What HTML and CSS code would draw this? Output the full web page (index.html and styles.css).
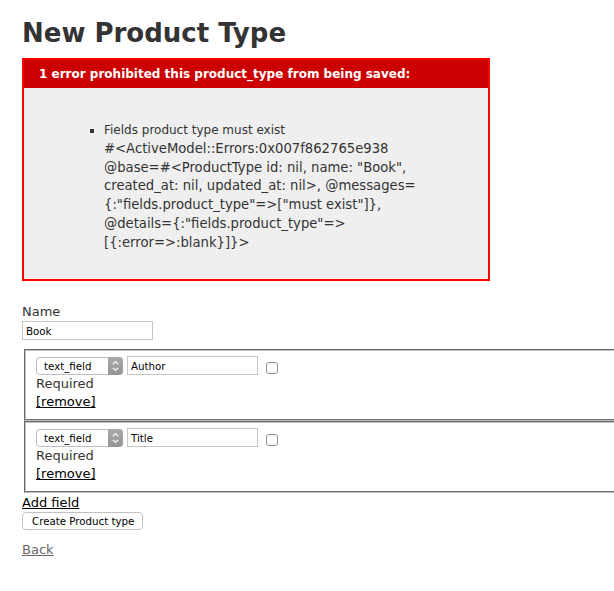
FILE: index.html
```html
<!DOCTYPE html>
<html>
<head>
<meta charset="utf-8">
<title>New Product Type</title>
<link rel="stylesheet" href="styles.css">
</head>
<body>
<h1 class="title">New Product Type</h1>

<div class="error-box">
  <h2 class="error-head">1 error prohibited this product_type from being saved:</h2>
  <ul class="error-list">
    <li>Fields product type must exist<div class="error-dump">#&lt;ActiveModel::Errors:0x007f862765e938<br>@base=#&lt;ProductType id: nil, name: "Book",<br>created_at: nil, updated_at: nil&gt;, @messages=<br>{:"fields.product_type"=&gt;["must exist"]},<br>@details={:"fields.product_type"=&gt;<br>[{:error=&gt;:blank}]}&gt;</div></li>
  </ul>
</div>

<form class="form" onsubmit="return false">
  <div class="name-field">
    <label class="label" for="name">Name</label>
    <input class="text-input" id="name" type="text" value="Book">
  </div>

  <fieldset class="field-set first">
    <div class="control-row">
      <span class="select-wrap">
        <select class="type-select"><option>text_field</option></select>
        <span class="select-arrow"><svg width="15" height="18" viewBox="0 0 15 18"><path d="M4.8 7.2 L7.5 4.6 L10.2 7.2" fill="none" stroke="#f4f4f4" stroke-width="1.3"/><path d="M4.8 10.8 L7.5 13.4 L10.2 10.8" fill="none" stroke="#f4f4f4" stroke-width="1.3"/></svg></span>
      </span>
      <input class="text-input" type="text" value="Author">
      <input class="check" type="checkbox">
    </div>
    <div class="line">Required</div>
    <div class="line"><a class="link" href="#">[remove]</a></div>
  </fieldset>

  <fieldset class="field-set">
    <div class="control-row">
      <span class="select-wrap">
        <select class="type-select"><option>text_field</option></select>
        <span class="select-arrow"><svg width="15" height="18" viewBox="0 0 15 18"><path d="M4.8 7.2 L7.5 4.6 L10.2 7.2" fill="none" stroke="#f4f4f4" stroke-width="1.3"/><path d="M4.8 10.8 L7.5 13.4 L10.2 10.8" fill="none" stroke="#f4f4f4" stroke-width="1.3"/></svg></span>
      </span>
      <input class="text-input" type="text" value="Title">
      <input class="check" type="checkbox">
    </div>
    <div class="line">Required</div>
    <div class="line"><a class="link" href="#">[remove]</a></div>
  </fieldset>

  <div class="line add-line"><a class="link" href="#">Add field</a></div>
  <div class="actions"><button class="submit" type="submit">Create Product type</button></div>
</form>

<div class="line back-line"><a class="back" href="#">Back</a></div>
</body>
</html>
```

FILE: styles.css
```css
html {
  overflow-x: hidden;
}

body {
  margin: 0;
  padding: 24px 22px;
  background: #fff;
  color: #333;
  font-family: "DejaVu Sans", Verdana, sans-serif;
  font-size: 13px;
  line-height: 18px;
}

.title {
  margin: 0 0 16px;
  font-size: 26px;
  line-height: 18px;
  font-weight: bold;
}

.error-box {
  width: 450px;
  border: 2px solid #f00;
  padding: 7px 7px 0;
  margin-bottom: 22px;
  background: #efefef;
}

.error-head {
  margin: -7px -7px 0;
  padding: 5px 5px 5px 15px;
  background: #c00;
  color: #fff;
  font-size: 12px;
  line-height: 18px;
  font-weight: bold;
}

.error-list {
  margin: 0;
  padding: 33px 0 27px 73px;
  font-size: 12px;
  line-height: 18.75px;
  list-style: square;
}

.error-dump {
  font-size: 13.2px;
  line-height: 18.75px;
}

.form {
  margin: 0;
}

.label {
  display: block;
}

.text-input {
  display: block;
  box-sizing: border-box;
  width: 131px;
  height: 19px;
  margin: 0;
  padding: 0 3px;
  border: 1px solid #c6c6c6;
  background: #fff;
  color: #000;
  font-family: "DejaVu Sans", Verdana, sans-serif;
  font-size: 10.25px;
  outline: none;
}

.field-set {
  width: 700px;
  margin: 0 0 0 2px;
  padding: 5px 10px 8px;
  border: 2px groove #c0c0c0;
  min-width: 0;
}

.field-set.first {
  margin-top: 9px;
}

.control-row {
  display: flex;
  align-items: flex-start;
  height: 19px;
}

.select-wrap {
  position: relative;
  display: block;
  width: 87px;
  height: 18px;
  margin-top: 1px;
  margin-right: 4px;
}

.type-select {
  -webkit-appearance: none;
  appearance: none;
  box-sizing: border-box;
  width: 87px;
  height: 18px;
  margin: 0;
  padding: 0 0 0 7px;
  border: 1px solid #bdbdbd;
  border-radius: 4px;
  background: #fff;
  color: #000;
  font-family: "DejaVu Sans", Verdana, sans-serif;
  font-size: 10.25px;
  line-height: 16px;
}

.select-arrow {
  position: absolute;
  top: 0;
  right: 0;
  width: 15px;
  height: 18px;
  border-radius: 0 4px 4px 0;
  background: linear-gradient(#a9a9a9, #959595);
}

.select-arrow svg {
  display: block;
}

.check {
  -webkit-appearance: none;
  appearance: none;
  box-sizing: border-box;
  width: 12px;
  height: 12px;
  margin: 6px 0 0 8px;
  border: 1px solid #8f8f8f;
  border-radius: 3px;
  background: #fff;
}

.line {
  height: 18px;
}

.add-line {
  padding-top: 1px;
}

.link {
  color: #000;
  text-decoration: underline;
}

.actions {
  height: 18px;
}

.submit {
  box-sizing: border-box;
  height: 18px;
  margin: 0;
  padding: 0 8px 0 9px;
  border: 1px solid #c2c2c2;
  border-radius: 4px;
  background: #fff;
  color: #000;
  font-family: "DejaVu Sans", Verdana, sans-serif;
  font-size: 10.25px;
  line-height: 16px;
}

.back-line {
  margin-top: 11px;
}

.back {
  color: #666;
  text-decoration: underline;
}
```
